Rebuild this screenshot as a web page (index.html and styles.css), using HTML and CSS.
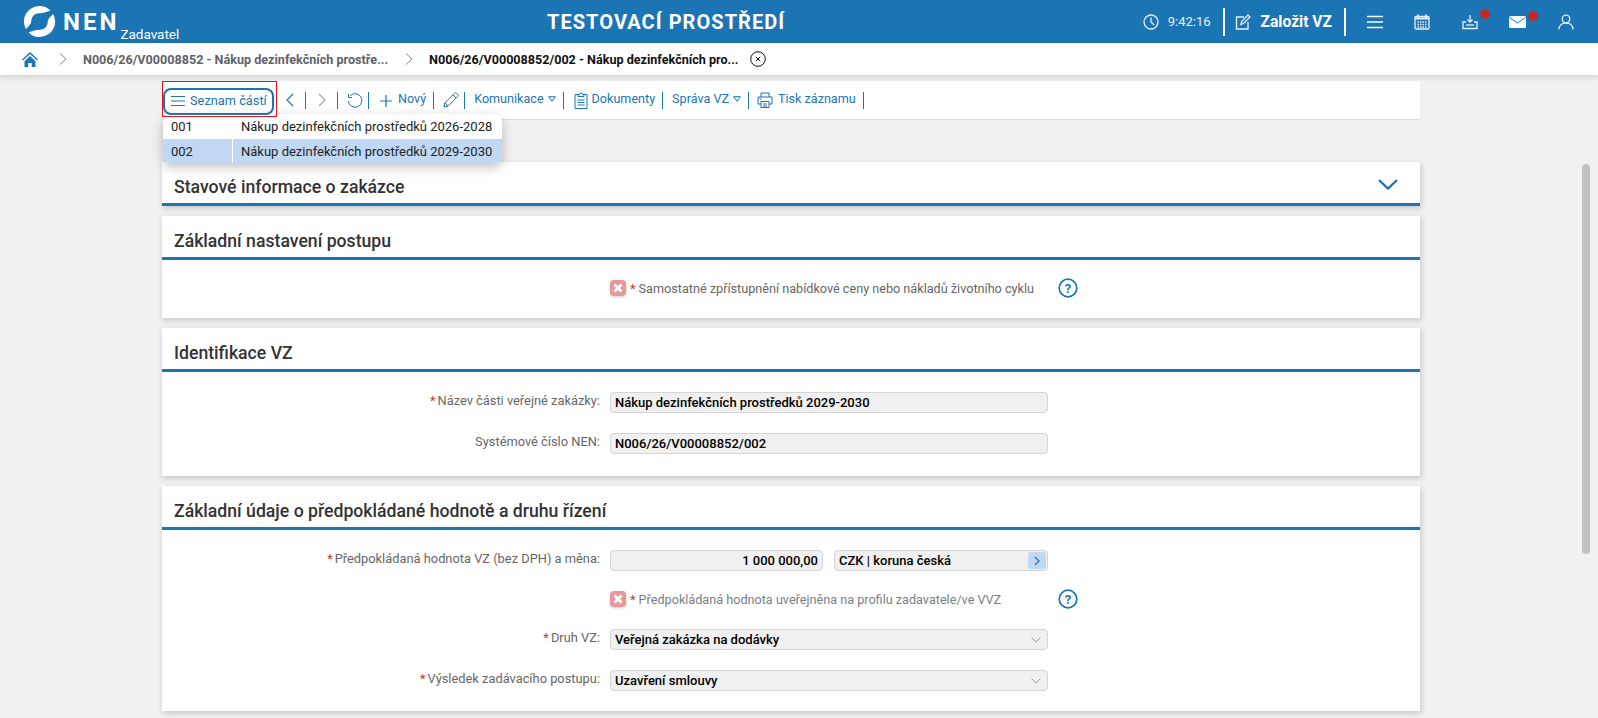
FILE: index.html
```html
<!DOCTYPE html>
<html lang="cs">
<head>
    <meta charset="UTF-8">
    <meta name="viewport" content="width=device-width, initial-scale=1.0">
    <title>NEN Zadavatel</title>
    <link rel="stylesheet" href="styles.css">
</head>
<body>
    <header class="topbar">
        <div class="brand">
            <svg class="brand-logo" viewBox="0 0 34 34"><path d="M28.300 5.700A16 16 0 0 0 3.100 25C5 22 8 20.500 8.500 17C8.500 12 12 8.500 17 8.500C21 8.500 25 7 28.300 5.700Z"/><path d="M28.300 5.700A16 16 0 0 0 3.100 25C5 22 8 20.500 8.500 17C8.500 12 12 8.500 17 8.500C21 8.500 25 7 28.300 5.700Z" transform="rotate(180 17 17)"/></svg>
            <span class="brand-name">NEN</span>
            <span class="brand-role">Zadavatel</span>
        </div>
        <div class="env-title">TESTOVACÍ PROSTŘEDÍ</div>
        <div class="top-actions">
            <svg class="top-icon" viewBox="0 0 16 16"><circle cx="8" cy="8" r="7"/><path d="M8 3.500V8l3 3"/></svg>
            <span class="clock">9:42:16</span>
            <span class="top-sep"></span>
            <svg class="top-icon" viewBox="0 0 16 16"><path d="M9 3H1.500v12h11.500V8"/><path d="M6 10.500l.6-3L13 1l2 2-6.400 6.400z"/></svg>
            <span class="create-link">Založit VZ</span>
            <span class="top-sep"></span>
            <svg class="top-icon top-icon-menu" viewBox="0 0 16 16"><path d="M0 2.500h16M0 8h16M0 13.500h16"/></svg>
            <svg class="top-icon top-icon-far calendar-icon" viewBox="0 0 16 16"><rect x="1" y="2.500" width="14" height="12.500" rx="1"/><path class="solid-line" d="M1 4.500h14M4 .5v3M12 .5v3"/><path class="dots" d="M3.500 8h9M3.500 10.500h9M3.500 13h9"/></svg>
            <span class="badged">
                <svg class="top-icon top-icon-far" viewBox="0 0 16 16"><path d="M8 1v7M5.500 5.500 8 8l2.500-2.500M4 8H1v6.500h14V8h-3"/><path d="M4 11h8"/></svg>
                <i class="red-dot"></i>
            </span>
            <span class="badged">
                <svg class="top-icon mail-icon" viewBox="0 0 17 12"><path class="mail-body" d="M0 1.500A1.500 1.500 0 0 1 1.500 0h14A1.500 1.500 0 0 1 17 1.500v9a1.500 1.500 0 0 1-1.500 1.500h-14A1.500 1.500 0 0 1 0 10.500z"/><path class="mail-flap" d="M.5 1.500l8 5.500 8-5.500"/></svg>
                <i class="red-dot"></i>
            </span>
            <svg class="top-icon top-icon-far" viewBox="0 0 16 16"><circle cx="8" cy="5" r="3.800"/><path d="M1 15.500c0-4 3-6.500 7-6.500s7 2.500 7 6.500"/></svg>
        </div>
    </header>

    <nav class="crumbs">
        <svg class="home-icon" viewBox="0 0 16 15"><path d="M8 0 0 7.500l1 1L8 2l7 6.500 1-1zM2.500 9.300 8 4l5.500 5.300V15H9.800v-4H6.200v4H2.500z"/></svg>
        <svg class="crumb-arrow" viewBox="0 0 8 12"><path d="M1 .5 7 6l-6 5.500"/></svg>
        <span class="crumb">N006/26/V00008852 - Nákup dezinfekčních prostře...</span>
        <svg class="crumb-arrow" viewBox="0 0 8 12"><path d="M1 .5 7 6l-6 5.500"/></svg>
        <span class="crumb crumb-active">N006/26/V00008852/002 - Nákup dezinfekčních pro...</span>
        <svg class="crumb-close" viewBox="0 0 16 16"><circle cx="8" cy="8" r="7.300"/><path d="M5.800 5.800l4.400 4.400M10.200 5.800l-4.400 4.400"/></svg>
    </nav>

    <main class="content">
        <div class="toolbar">
            <div class="parts-mark">
                <button class="parts-btn">
                    <svg class="tb-icon" viewBox="0 0 14 12"><path d="M0 1.500h14M0 6h14M0 10.500h14"/></svg>
                    Seznam částí
                </button>
            </div>
            <svg class="tb-chevron" viewBox="0 0 8 14"><path d="M7 1 1 7l6 6"/></svg>
            <span class="tb-sep"></span>
            <svg class="tb-chevron tb-disabled" viewBox="0 0 8 14"><path d="M1 1l6 6-6 6"/></svg>
            <span class="tb-sep"></span>
            <svg class="tb-icon tb-icon-lg" viewBox="0 0 16 16"><path d="M3.200 3.700A6.800 6.800 0 1 1 1.300 9"/><path d="M1.500 2v3.500H5"/></svg>
            <span class="tb-sep"></span>
            <svg class="tb-icon tb-icon-plus" viewBox="0 0 12 12"><path d="M6 0v12M0 6h12"/></svg>
            <span class="tb-item">Nový</span>
            <span class="tb-sep"></span>
            <svg class="tb-icon tb-icon-lg" viewBox="0 0 16 16"><path d="M1 15l.8-4L11.500 1.300a1.500 1.500 0 0 1 2.100 0l1.100 1.100a1.500 1.500 0 0 1 0 2.100L5 14.200zM10 3l3 3M2 11l3 3"/></svg>
            <span class="tb-sep"></span>
            <span class="tb-item">Komunikace</span>
            <svg class="tb-caret" viewBox="0 0 8 6"><path d="M.7.7h6.600L4 5.300z"/></svg>
            <span class="tb-sep"></span>
            <svg class="tb-icon tb-icon-doc" viewBox="0 0 14 17"><path d="M4 2.500H1v14h12v-14h-3"/><path d="M4 4.500V2.500h1.500a1.500 1.500 0 0 1 3 0H10v2zM3.500 8h7M3.500 10.500h7M3.500 13h7"/></svg>
            <span class="tb-item">Dokumenty</span>
            <span class="tb-sep"></span>
            <span class="tb-item">Správa VZ</span>
            <svg class="tb-caret" viewBox="0 0 8 6"><path d="M.7.7h6.600L4 5.300z"/></svg>
            <span class="tb-sep"></span>
            <svg class="tb-icon tb-icon-print" viewBox="0 0 16 16"><path d="M4 5V1h8v4M4 12H1V5h14v7h-3"/><path d="M4 9.500h8v6H4zM6 12h4M6 14h4M2.500 7h2"/></svg>
            <span class="tb-item">Tisk záznamu</span>
            <span class="tb-sep"></span>

            <div class="parts-menu">
                <div class="parts-row"><span class="parts-no">001</span><span class="parts-name">Nákup dezinfekčních prostředků 2026-2028</span></div>
                <div class="parts-row parts-row-active"><span class="parts-no">002</span><span class="parts-name">Nákup dezinfekčních prostředků 2029-2030</span></div>
            </div>
        </div>

        <section class="card">
            <div class="card-head">
                <h2>Stavové informace o zakázce</h2>
                <svg class="collapse-icon" viewBox="0 0 20 11"><path d="M1 1l9 8.500L19 1"/></svg>
            </div>
        </section>

        <section class="card">
            <div class="card-head"><h2>Základní nastavení postupu</h2></div>
            <div class="card-body">
                <div class="row row-check">
                    <span></span>
                    <div class="check-field">
                        <span class="check-box"><svg viewBox="0 0 10 10"><path d="M1.500 1.500l7 7M8.500 1.500l-7 7"/></svg></span>
                        <span class="req">*</span>
                        <span class="check-label">Samostatné zpřístupnění nabídkové ceny nebo nákladů životního cyklu</span>
                    </div>
                    <svg class="help-icon" viewBox="0 0 20 20"><circle cx="10" cy="10" r="8.800"/><text x="10" y="14.500" text-anchor="middle">?</text></svg>
                </div>
            </div>
        </section>

        <section class="card">
            <div class="card-head"><h2>Identifikace VZ</h2></div>
            <div class="card-body card-body-tall">
                <div class="row">
                    <label><span class="req">*</span>Název části veřejné zakázky:</label>
                    <div class="input">Nákup dezinfekčních prostředků 2029-2030</div>
                </div>
                <div class="row">
                    <label>Systémové číslo NEN:</label>
                    <div class="input">N006/26/V00008852/002</div>
                </div>
            </div>
        </section>

        <section class="card">
            <div class="card-head"><h2>Základní údaje o předpokládané hodnotě a druhu řízení</h2></div>
            <div class="card-body">
                <div class="row">
                    <label><span class="req">*</span>Předpokládaná hodnota VZ (bez DPH) a měna:</label>
                    <div class="input-pair">
                        <div class="input input-num">1 000 000,00</div>
                        <div class="input input-lookup">CZK | koruna česká
                            <span class="lookup-btn"><svg viewBox="0 0 6 10"><path d="M1 1l4 4-4 4"/></svg></span>
                        </div>
                    </div>
                </div>
                <div class="row row-check">
                    <span></span>
                    <div class="check-field">
                        <span class="check-box"><svg viewBox="0 0 10 10"><path d="M1.500 1.500l7 7M8.500 1.500l-7 7"/></svg></span>
                        <span class="req">*</span>
                        <span class="check-label check-label-light">Předpokládaná hodnota uveřejněna na profilu zadavatele/ve VVZ</span>
                    </div>
                    <svg class="help-icon" viewBox="0 0 20 20"><circle cx="10" cy="10" r="8.800"/><text x="10" y="14.500" text-anchor="middle">?</text></svg>
                </div>
                <div class="row">
                    <label><span class="req">*</span>Druh VZ:</label>
                    <div class="input input-select">Veřejná zakázka na dodávky
                        <svg class="select-arrow" viewBox="0 0 10 6"><path d="M.5.500 5 5 9.500.5"/></svg>
                    </div>
                </div>
                <div class="row">
                    <label><span class="req">*</span>Výsledek zadávacího postupu:</label>
                    <div class="input input-select">Uzavření smlouvy
                        <svg class="select-arrow" viewBox="0 0 10 6"><path d="M.5.500 5 5 9.500.5"/></svg>
                    </div>
                </div>
            </div>
        </section>

        <div class="scroll-thumb"></div>
    </main>
</body>
</html>
```

FILE: styles.css
```css
* {
    box-sizing: border-box;
}

body {
    margin: 0;
    height: 100vh;
    overflow: hidden;
    display: flex;
    flex-direction: column;
    font-family: Roboto, "Liberation Sans", sans-serif;
    font-size: 13px;
    color: #222;
    background-color: #f1f1f1;
}

svg {
    display: block;
    flex: none;
    fill: none;
}

/* top blue bar */
.topbar {
    flex: none;
    height: 43px;
    display: flex;
    align-items: center;
    background-color: #1b75b4;
    color: #fff;
    padding-right: 24px;
}
.brand {
    width: 547px;
    height: 43px;
    display: flex;
    flex: none;
    padding-left: 23px;
}
.brand-logo {
    width: 33px;
    height: 33px;
    margin-top: 5px;
    fill: #fff;
}
.brand-name {
    font-size: 24px;
    font-weight: 700;
    letter-spacing: 3px;
    line-height: 28px;
    margin: 8px 0 0 7px;
}
.brand-role {
    font-size: 13.500px;
    line-height: 16px;
    margin: 26px 0 0 1px;
}
.env-title {
    font-size: 20px;
    font-weight: 700;
    letter-spacing: 1.050px;
}
.top-actions {
    margin-left: auto;
    display: flex;
    align-items: center;
}
.top-icon {
    width: 16px;
    height: 16px;
    stroke: #e6f0f7;
    stroke-width: 1.300;
}
.clock {
    font-size: 13px;
    margin: 0 12px 0 9px;
    color: #e6f0f7;
}
.top-sep {
    width: 2px;
    height: 28px;
    background-color: #fff;
}
.top-sep + .top-icon {
    margin-left: 10px;
}
.create-link {
    font-size: 15.600px;
    font-weight: 700;
    margin: 0 12px 0 10px;
}
.top-sep + .top-icon-menu {
    margin-left: 21px;
    stroke: #fff;
    stroke-width: 1.600;
}
.top-icon-far {
    margin-left: 32px;
}
.calendar-icon {
    margin-left: 31px;
}
.solid-line {
    stroke-width: 1.800;
}
.dots {
    stroke-dasharray: 1.500 1;
}
.badged {
    position: relative;
    display: block;
}
.red-dot {
    position: absolute;
    width: 10px;
    height: 10px;
    top: -5px;
    right: -12px;
    border-radius: 50%;
    background-color: #c62828;
}
.mail-icon {
    width: 17px;
    height: 12px;
    margin-left: 31px;
}
.mail-body {
    fill: #fff;
    stroke: none;
}
.mail-flap {
    stroke: #1b75b4;
    stroke-width: 1;
}

/* breadcrumbs */
.crumbs {
    flex: none;
    height: 32px;
    display: flex;
    align-items: center;
    padding-left: 22px;
    background-color: #fff;
    box-shadow: 0 2px 6px rgba(0,0,0,0.15);
    position: relative;
    z-index: 2;
}
.home-icon {
    width: 16px;
    height: 15px;
    fill: #1b75b4;
}
.crumb-arrow {
    width: 8px;
    height: 12px;
    margin: 0 16px 0 21px;
    stroke: #7f8c99;
    stroke-width: 1;
}
.crumb {
    font-size: 12.600px;
    font-weight: 700;
    color: #5f6368;
}
.crumb + .crumb-arrow {
    margin-left: 17px;
    margin-right: 16px;
}
.crumb-active {
    color: #111;
}
.crumb-close {
    width: 16px;
    height: 16px;
    margin-left: 11px;
    stroke: #111;
    stroke-width: 1;
}

/* page content */
.content {
    flex: 1;
    position: relative;
    overflow: hidden;
    padding: 6px 178px 0 162px;
}
.scroll-thumb {
    position: absolute;
    top: 89px;
    right: 8px;
    width: 8px;
    height: 390px;
    border-radius: 4px;
    background-color: #c1c1c1;
}

/* toolbar */
.toolbar {
    position: relative;
    height: 39px;
    display: flex;
    align-items: flex-start;
    margin-bottom: 42px;
    background-color: #fff;
    border-bottom: 1px solid #ddd;
    color: #1b75b4;
    font-size: 12.600px;
}
.toolbar > svg,
.toolbar > span {
    margin-top: 11px;
}
.toolbar > .tb-item {
    margin-top: 9px;
}
.parts-mark {
    position: relative;
    z-index: 4;
    width: 115px;
    height: 36px;
    padding: 6px 0 0 1px;
    border: 1px solid #e8141c;
    margin-right: 9px;
}
.parts-btn {
    width: 111px;
    height: 27px;
    margin: 0 0 0 -1px;
    display: flex;
    align-items: center;
    padding: 0 0 2px 6px;
    background: none;
    border: 2px solid #1b75b4;
    border-radius: 8px;
    font: inherit;
    font-size: 12.800px;
    color: inherit;
    white-space: nowrap;
}
.parts-btn .tb-icon {
    width: 14px;
    height: 12px;
    margin-right: 5px;
}
.tb-icon {
    stroke: #1b75b4;
    stroke-width: 1;
}
.tb-icon-lg {
    width: 16px;
    height: 16px;
    margin-left: 9px;
    margin-right: 5px;
}
.tb-icon-plus {
    width: 12px;
    height: 12px;
    margin-left: 11px;
    margin-right: 6px;
    stroke-width: 1.200;
}
.toolbar > .tb-icon-plus {
    margin-top: 14px;
}
.tb-icon-doc {
    width: 14px;
    height: 17px;
    margin-left: 10px;
    margin-right: 4px;
}
.tb-icon-print {
    width: 16px;
    height: 16px;
    margin-left: 8px;
    margin-right: 5px;
}
.tb-chevron {
    width: 8px;
    height: 14px;
    margin: 0 11px 0 0;
    stroke: #1b75b4;
    stroke-width: 1.200;
}
.toolbar > .tb-chevron {
    margin-top: 12px;
}
.tb-sep + .tb-chevron {
    margin-left: 12px;
}
.tb-disabled {
    stroke: #9aa7b2;
}
.tb-sep {
    width: 1px;
    height: 17px;
    background-color: #1b75b4;
}
.tb-item {
    line-height: 17px;
    margin-right: 7px;
}
.tb-sep + .tb-item {
    margin-left: 9px;
}
.tb-caret {
    width: 8px;
    height: 6px;
    margin-left: -3px;
    margin-right: 7px;
    stroke: #1b75b4;
    stroke-width: 1;
}
.toolbar > .tb-caret {
    margin-top: 15px;
}

/* dropdown with contract parts */
.parts-menu {
    position: absolute;
    top: 33px;
    left: 1px;
    width: 339px;
    z-index: 3;
    background-color: #fff;
    border-radius: 8px;
    overflow: hidden;
    box-shadow: 0 4px 12px rgba(0,0,0,0.25);
    color: #222;
}
.parts-row {
    display: flex;
    height: 24.500px;
    font-size: 13px;
    line-height: 26px;
}
.parts-no {
    width: 70px;
    padding-left: 8px;
    border-right: 1px solid #fff;
}
.parts-name {
    padding-left: 8px;
}
.parts-row-active {
    background-color: #c0d8f4;
}

/* cards */
.card {
    margin-bottom: 10px;
    background-color: #fff;
    box-shadow: 1px 2px 6px rgba(0,0,0,0.2);
}
.card-head {
    height: 44px;
    display: flex;
    align-items: center;
    justify-content: space-between;
    padding: 9px 22px 0 12px;
    border-bottom: 3px solid #1b75b4;
}
.card-head h2 {
    margin: 0;
    font-size: 17.650px;
    font-weight: 500;
    color: #333;
}
.collapse-icon {
    width: 20px;
    height: 11px;
    margin-top: -5px;
    stroke: #1b75b4;
    stroke-width: 2.400;
}
.card-body {
    display: flex;
    flex-direction: column;
    gap: 20px;
    padding: 20px 0;
}
.card-body-tall {
    padding-bottom: 22px;
}
.row {
    display: grid;
    grid-template-columns: 438px 438px 20px;
    column-gap: 10px;
    align-items: center;
    height: 21px;
}
.row label {
    text-align: right;
    color: #666;
    font-size: 12.850px;
    padding-bottom: 4px;
}
.row label .req {
    margin-right: 2px;
}
.row-check {
    height: 18px;
    margin: -2px 0 2px;
}
.req {
    color: #d32f2f;
}
.check-field {
    display: flex;
    align-items: center;
    white-space: nowrap;
}
.check-box {
    width: 16px;
    height: 16px;
    margin-right: 4px;
    display: flex;
    align-items: center;
    justify-content: center;
    border-radius: 4px;
    background-color: #e59a9a;
    box-shadow: 0 1px 3px rgba(0,0,0,0.2);
}
.check-box svg {
    width: 10px;
    height: 10px;
    stroke: #fff;
    stroke-width: 2.600;
}
.check-label {
    margin-left: 3px;
    color: #666;
    font-size: 12.650px;
}
.check-label-light {
    color: #7a7f85;
}
.help-icon {
    width: 20px;
    height: 20px;
    stroke: #1b75b4;
    stroke-width: 1.700;
}
.help-icon text {
    font-family: Roboto, sans-serif;
    font-size: 13px;
    font-weight: 700;
    fill: #1b75b4;
    stroke: none;
}

/* read only inputs */
.input {
    height: 21px;
    display: flex;
    align-items: center;
    justify-content: space-between;
    padding: 0 4px;
    border: 1px solid #d4d4d4;
    border-radius: 4px;
    background-color: #f0f0f0;
    color: #000;
    font-weight: 500;
}
.input-pair {
    display: grid;
    grid-template-columns: 213px 214px;
    gap: 11px;
}
.input-num {
    justify-content: flex-end;
}
.input-lookup {
    padding-right: 1px;
}
.lookup-btn {
    width: 18px;
    height: 17px;
    display: flex;
    align-items: center;
    justify-content: center;
    border-radius: 3px;
    background-color: #c0d8f4;
}
.lookup-btn svg {
    width: 6px;
    height: 10px;
    stroke: #1b75b4;
    stroke-width: 1.200;
}
.select-arrow {
    width: 10px;
    height: 6px;
    margin-right: 2px;
    stroke: #9a9a9a;
    stroke-width: 1;
}
```
